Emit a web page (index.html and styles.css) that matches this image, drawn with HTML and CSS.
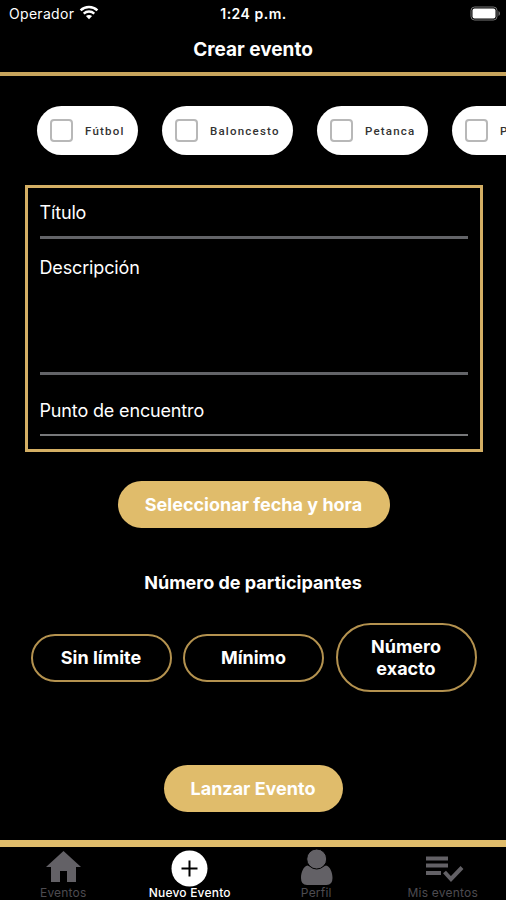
FILE: index.html
```html
<!DOCTYPE html>
<html lang="es">

<head>
    <meta charset="UTF-8">
    <meta name="viewport" content="width=device-width, initial-scale=1.0">
    <title>Crear evento</title>
    <link rel="stylesheet" href="styles.css">
</head>

<body>
    <!-- Status bar -->
    <div class="status-bar">
        <div class="carrier">
            <span class="carrier-name">Operador</span>
            <svg class="wifi" width="20" height="15" viewBox="0 0 20 15">
                <path d="M1.6 5.4C6.3 .9 13.7 .9 18.4 5.4" fill="none" stroke="#fff" stroke-width="2.5"/>
                <path d="M4.7 8.6C7.7 5.8 12.3 5.8 15.3 8.6" fill="none" stroke="#fff" stroke-width="2.3"/>
                <path d="M10 14.2L6.9 11.1C8.6 9.5 11.4 9.5 13.1 11.1Z" fill="#fff"/>
            </svg>
        </div>
        <div class="clock">1:24 p.m.</div>
        <svg class="battery" width="31" height="15" viewBox="0 0 31 15">
            <rect x="1" y="1" width="26" height="13" rx="3.5" fill="none" stroke="#777" stroke-width="1"/>
            <rect x="2.5" y="2.5" width="23" height="10" rx="2" fill="#fff"/>
            <path d="M28.5 5V10Q30 9.2 30 7.5Q30 5.8 28.5 5Z" fill="#777"/>
        </svg>
    </div>

    <div class="header">Crear evento</div>

    <!-- Sports -->
    <div class="sports">
        <label class="sport futbol"><span class="check"></span><span>Fútbol</span></label>
        <label class="sport baloncesto"><span class="check"></span><span>Baloncesto</span></label>
        <label class="sport petanca"><span class="check"></span><span>Petanca</span></label>
        <label class="sport padel"><span class="check"></span><span>P</span></label>
    </div>

    <div class="event-form">
        <div class="field title-field"><span>Título</span></div>
        <div class="field description-field"><span>Descripción</span></div>
        <div class="field place-field"><span>Punto de encuentro</span></div>
    </div>

    <button class="btn date-btn">Seleccionar fecha y hora</button>

    <div class="section-title">Número de participantes</div>
    <div class="options">
        <button class="option">Sin límite</button>
        <button class="option">Mínimo</button>
        <button class="option tall">Número<br>exacto</button>
    </div>

    <button class="btn launch-btn">Lanzar Evento</button>

    <!-- Bottom tabs -->
    <div class="tabs">
        <div class="tab">
            <svg width="36" height="37" viewBox="0 0 36 37">
                <path d="M18.500 4L1 20H6V35H15V24H22V35H31V20H36Z" fill="#636166"/>
            </svg>
            <span>Eventos</span>
        </div>
        <div class="tab active">
            <svg width="36" height="37" viewBox="0 0 36 37">
                <circle cx="17.500" cy="21.500" r="18" fill="#fff"/>
                <path d="M17.500 13.500V29.500M9.500 21.500H25.500" stroke="#000" stroke-width="2"/>
            </svg>
            <span>Nuevo Evento</span>
        </div>
        <div class="tab">
            <svg width="36" height="37" viewBox="0 0 36 37">
                <path d="M9.500 18.500C5.500 19.500 3 25 3 31Q3 38 9 38H28.500Q34.500 38 34.500 31C34.500 25 32 19.500 28 18.500Q18.500 24 9.500 18.500Z" fill="#636166"/>
                <circle cx="18.700" cy="12" r="10" fill="#636166" stroke="#000" stroke-width="1"/>
            </svg>
            <span>Perfil</span>
        </div>
        <div class="tab">
            <svg width="38" height="37" viewBox="0 0 38 37">
                <path d="M2 11.500H24M2 18.500H24M2 26H17" stroke="#636166" stroke-width="4.2" fill="none"/>
                <path d="M20.500 25L27 32L38 20.500" stroke="#636166" stroke-width="4" fill="none"/>
            </svg>
            <span>Mis eventos</span>
        </div>
    </div>
</body>

</html>
```
FILE: styles.css
```css
* {
    box-sizing: border-box;
}

body {
    margin: 0;
    height: 900px;
    display: flex;
    flex-direction: column;
    align-items: center;
    overflow: hidden;
    background-color: #000;
    color: #fff;
    font-family: Inter, sans-serif;
}

button {
    padding: 0;
    color: #fff;
    font-family: inherit;
    cursor: pointer;
}

span {
    white-space: nowrap;
}

.status-bar {
    width: 100%;
    height: 27px;
    padding: 0 5px 0 9px;
    display: grid;
    grid-template-columns: 1fr auto 1fr;
    align-items: center;
    font-size: 14px;
}

.carrier {
    display: flex;
    align-items: center;
    gap: 5px;
}

.carrier-name {
    letter-spacing: 0.3px;
}

.wifi {
    margin-bottom: 2px;
}

.clock {
    padding-right: 3px;
    font-weight: 600;
    letter-spacing: 0.5px;
}

.battery {
    justify-self: end;
    margin-bottom: 1px;
}

.header {
    width: 100%;
    height: 49px;
    border-bottom: 4px solid #c7a45c;
    line-height: 45px;
    text-align: center;
    font-size: 19px;
    font-weight: 700;
}

.sports {
    width: 100%;
    margin-top: 30px;
    padding-left: 37px;
    display: flex;
    gap: 24px;
    overflow: hidden;
}

.sport {
    flex: none;
    height: 49px;
    padding-left: 13px;
    display: flex;
    align-items: center;
    gap: 12px;
    border-radius: 25px;
    background-color: #fff;
    color: #333;
    font-family: Roboto, sans-serif;
    font-size: 11.5px;
    font-weight: 500;
    letter-spacing: 1.2px;
}

.futbol {
    width: 101px;
}

.baloncesto {
    width: 131px;
}

.petanca {
    width: 111px;
}

.padel {
    width: 100px;
}

.check {
    width: 23px;
    height: 23px;
    border: 2px solid #b8b8b8;
    border-radius: 4px;
}

.event-form {
    width: 458px;
    height: 267px;
    margin-top: 30px;
    margin-left: 1px;
    padding: 0 12px;
    border: 3px solid #d4af64;
    font-size: 18px;
    line-height: 22px;
    letter-spacing: -0.15px;
}

.field {
    border-bottom: 3px solid #636468;
}

.title-field {
    height: 51px;
    padding-top: 14px;
}

.description-field {
    height: 136px;
    padding-top: 18px;
}

.place-field {
    height: 61px;
    padding-top: 25px;
    border-bottom: 2px solid #77787a;
}

.btn {
    flex: none;
    height: 47px;
    border: none;
    border-radius: 24px;
    background-color: #e0bc6b;
    font-size: 18px;
    font-weight: 700;
}

.date-btn {
    width: 272px;
    margin-top: 29px;
    margin-left: 1px;
}

.section-title {
    height: 24px;
    margin-top: 42px;
    line-height: 25px;
    font-size: 18px;
    font-weight: 700;
}

.options {
    width: 446px;
    height: 69px;
    margin-top: 29px;
    margin-left: 1px;
    display: flex;
    align-items: center;
    justify-content: space-between;
}

.option {
    width: 141px;
    height: 48px;
    border: 2px solid #b4924f;
    border-radius: 35px;
    background-color: #000;
    font-size: 18px;
    line-height: 22px;
    font-weight: 700;
}

.tall {
    height: 69px;
}

.launch-btn {
    width: 179px;
    margin-top: 73px;
}

.tabs {
    width: 100%;
    height: 60px;
    margin-top: 28px;
    border-top: 7px solid #e0bc6b;
    display: flex;
    flex: none;
}

.tab {
    flex: 1;
    display: flex;
    flex-direction: column;
    align-items: center;
    color: #4d4b50;
    font-size: 12px;
    line-height: 14px;
    letter-spacing: 0.2px;
}

.tab svg {
    flex: none;
    overflow: visible;
}

.tab span {
    margin-top: 2px;
}

.active {
    color: #fff;
    font-weight: 500;
}
```
